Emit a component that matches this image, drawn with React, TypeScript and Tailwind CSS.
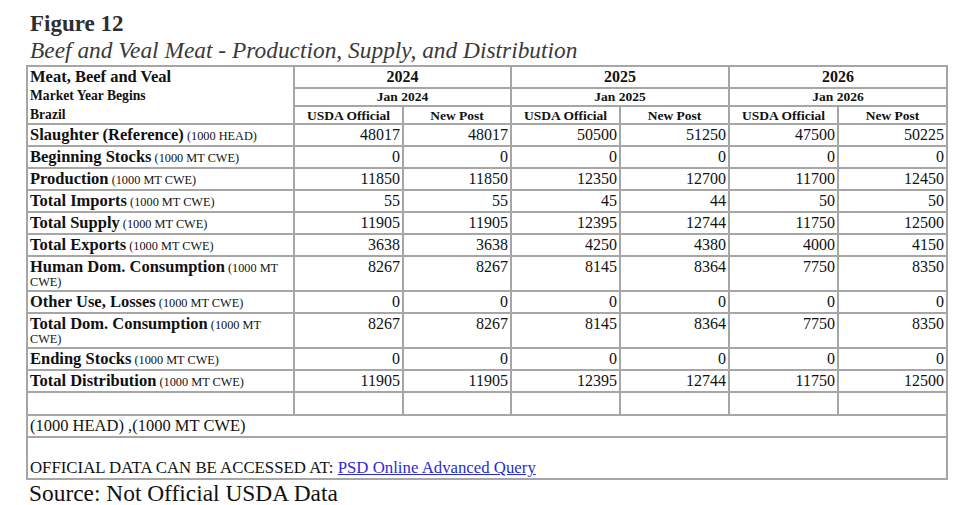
import React from "react"

type Row = {
  label: string
  unit: string
  wrap?: boolean
  values: number[]
}

const rows: Row[] = [
  { label: "Slaughter (Reference)", unit: "(1000 HEAD)", values: [48017, 48017, 50500, 51250, 47500, 50225] },
  { label: "Beginning Stocks", unit: "(1000 MT CWE)", values: [0, 0, 0, 0, 0, 0] },
  { label: "Production", unit: "(1000 MT CWE)", values: [11850, 11850, 12350, 12700, 11700, 12450] },
  { label: "Total Imports", unit: "(1000 MT CWE)", values: [55, 55, 45, 44, 50, 50] },
  { label: "Total Supply", unit: "(1000 MT CWE)", values: [11905, 11905, 12395, 12744, 11750, 12500] },
  { label: "Total Exports", unit: "(1000 MT CWE)", values: [3638, 3638, 4250, 4380, 4000, 4150] },
  { label: "Human Dom. Consumption", unit: "(1000 MT CWE)", wrap: true, values: [8267, 8267, 8145, 8364, 7750, 8350] },
  { label: "Other Use, Losses", unit: "(1000 MT CWE)", values: [0, 0, 0, 0, 0, 0] },
  { label: "Total Dom. Consumption", unit: "(1000 MT CWE)", wrap: true, values: [8267, 8267, 8145, 8364, 7750, 8350] },
  { label: "Ending Stocks", unit: "(1000 MT CWE)", values: [0, 0, 0, 0, 0, 0] },
  { label: "Total Distribution", unit: "(1000 MT CWE)", values: [11905, 11905, 12395, 12744, 11750, 12500] },
]

const years = ["2024", "2025", "2026"]

const cell = "border-2 border-[#a6a6a6] p-0 align-top"

export default function App() {
  return (
    <main
      className="min-h-screen w-[960px] bg-white pt-[11px] text-[#111]"
      style={{ fontFamily: '"Liberation Serif", "Times New Roman", serif' }}
    >
      {/* 标题 */}
      <div className="pl-[30px]">
        <h1 className="text-[23px] font-bold leading-[26px] text-[#2e2e2e]">Figure 12</h1>
        <p className="text-[23.4px] italic leading-[26px] text-[#3a3a3a]">
          Beef and Veal Meat - Production, Supply, and Distribution
        </p>
      </div>

      {/* 表格 */}
      <table className="ml-[26px] mt-[2px] w-[920px] table-fixed border-collapse">
        <colgroup>
          <col className="w-[267px]" />
          <col className="w-[109px]" />
          <col className="w-[108px]" />
          <col className="w-[109px]" />
          <col className="w-[109px]" />
          <col className="w-[109px]" />
          <col className="w-[109px]" />
        </colgroup>
        <tbody>
          <tr className="h-[22px]">
            <td className={`${cell} border-b-0 pl-[2px] pt-[1px] text-[16.5px] font-bold leading-[18px]`}>
              Meat, Beef and Veal
            </td>
            {years.map((y) => (
              <td key={y} colSpan={2} className={`${cell} pt-[1px] text-center text-[16px] font-bold leading-[18px]`}>
                {y}
              </td>
            ))}
          </tr>
          <tr className="h-[18px]">
            <td className={`${cell} border-y-0 pl-[2px] text-[13.6px] font-bold leading-[15px]`}>Market Year Begins</td>
            {years.map((y) => (
              <td key={y} colSpan={2} className={`${cell} text-center text-[13.5px] font-bold leading-[15px]`}>
                Jan {y}
              </td>
            ))}
          </tr>
          <tr className="h-[18px]">
            <td className={`${cell} border-t-0 pl-[2px] pt-[1px] text-[13.6px] font-bold leading-[15px]`}>Brazil</td>
            {years.map((y) => (
              <React.Fragment key={y}>
                <td className={`${cell} pt-[1px] text-center text-[13.5px] font-bold leading-[15px]`}>USDA Official</td>
                <td className={`${cell} pt-[1px] text-center text-[13.5px] font-bold leading-[15px]`}>New Post</td>
              </React.Fragment>
            ))}
          </tr>

          {rows.map((r) => (
            <tr key={r.label} className={r.wrap ? "h-[35px]" : "h-[22px]"}>
              <td className={`${cell} pl-[2px] pt-[1px] text-[12.3px] leading-[13px]`}>
                <span className="text-[16.5px] font-bold leading-[18px]">{r.label}</span>{" "}
                {r.wrap ? (
                  <>
                    <span>(1000 MT</span>
                    <br />
                    <span>CWE)</span>
                  </>
                ) : (
                  <span>{r.unit}</span>
                )}
              </td>
              {r.values.map((v, i) => (
                <td key={i} className={`${cell} pr-[2px] pt-[1px] text-right text-[16px] leading-[18px]`}>
                  {v}
                </td>
              ))}
            </tr>
          ))}

          <tr className="h-[23px]">
            {Array.from({ length: 7 }).map((_, i) => (
              <td key={i} className={cell}></td>
            ))}
          </tr>
          <tr className="h-[22px]">
            <td colSpan={7} className={`${cell} pl-[2px] pt-[1px] text-[16.5px] leading-[18px]`}>
              (1000 HEAD) ,(1000 MT CWE)
            </td>
          </tr>
          <tr className="h-[42px]">
            <td colSpan={7} className={`${cell} !align-bottom pb-[1px] pl-[2px] text-[16.8px] leading-[18px]`}>
              OFFICIAL DATA CAN BE ACCESSED AT:{" "}
              <a href="#" className="text-[#2b2bd6] underline">
                PSD Online Advanced Query
              </a>
            </td>
          </tr>
        </tbody>
      </table>

      <p className="pl-[29px] text-[23.4px] leading-[26px]">Source: Not Official USDA Data</p>
    </main>
  )
}
